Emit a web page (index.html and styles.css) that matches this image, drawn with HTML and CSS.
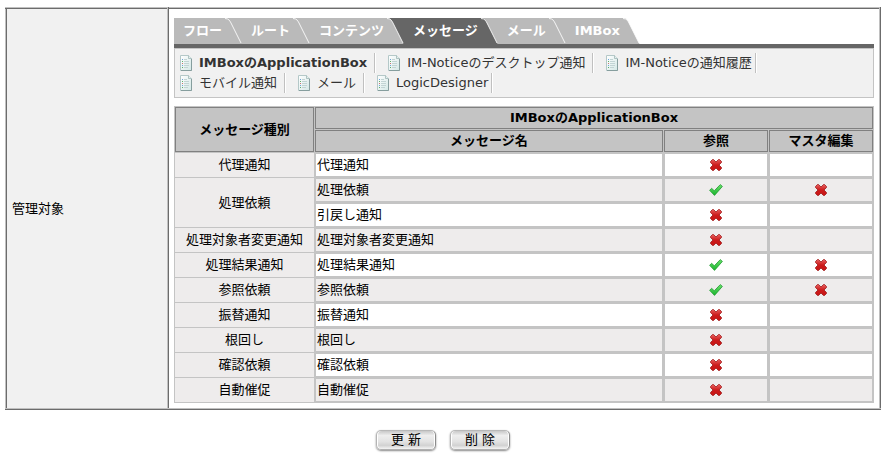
FILE: index.html
```html
<!DOCTYPE html>
<html lang="ja">
<head>
  <meta charset="UTF-8">
  <meta name="viewport" content="width=device-width, initial-scale=1.0">
  <title>管理対象</title>
  <link rel="stylesheet" href="styles.css">
</head>
<body>
  <!-- アイコン定義 -->
  <svg class="defs" width="0" height="0" aria-hidden="true">
    <defs>
      <linearGradient id="gRed" x1="0" y1="0" x2="0" y2="1">
        <stop offset="0" stop-color="#e86060"/>
        <stop offset="0.5" stop-color="#cc1c1c"/>
        <stop offset="1" stop-color="#c81414"/>
      </linearGradient>
      <linearGradient id="gGreen" x1="0" y1="0" x2="0" y2="1">
        <stop offset="0" stop-color="#6be06b"/>
        <stop offset="1" stop-color="#18b52c"/>
      </linearGradient>
      <linearGradient id="gDoc" x1="0" y1="0" x2="1" y2="1">
        <stop offset="0" stop-color="#ffffff"/>
        <stop offset="1" stop-color="#d4e8e6"/>
      </linearGradient>
      <symbol id="cross" viewBox="0 0 12 12">
        <path d="M2.5 .5H3.5L6 3 8.500 .5H9.500L11.500 2.500V3.500L9 6 11.500 8.500V9.500L9.500 11.500H8.500L6 9 3.500 11.500H2.500L.5 9.500V8.500L3 6 .5 3.500V2.500Z" fill="url(#gRed)" stroke="#9c1a1a" stroke-width=".8"/>
      </symbol>
      <symbol id="check" viewBox="0 0 14 12">
        <path d="M.6 6.300 2.600 4.300 5.300 6.800 11.300 .6 13.400 2.400 5.500 11.400Z" fill="url(#gGreen)" stroke="#239a35" stroke-width=".8" stroke-linejoin="round"/>
      </symbol>
      <symbol id="doc" viewBox="0 0 12 16">
        <path d="M.5 .5H8.500L11.500 3.500V15.500H.5Z" fill="url(#gDoc)" stroke="#b4c8c8"/>
        <path d="M11.500 4V15.500H1" fill="none" stroke="#869e9e"/>
        <path d="M8.500 .5V3.500H11.500" fill="#e4efee" stroke="#9fb6b6" stroke-width=".8"/>
        <path d="M4 4.500H7M4 6.500H9M4 8.500H9M4 10.500H9M4 12.500H8" stroke="#c2d4d4"/>
        <path d="M2 4.500H3M2 10.500H3" stroke="#6fa4da"/>
        <path d="M2 6.500H3M2 12.500H3" stroke="#5fae68"/>
        <path d="M2 8.500H3" stroke="#cc7670"/>
      </symbol>
      <symbol id="slant" viewBox="0 0 17 26">
        <path d="M0 0C4 0 5 3 6.500 6L16.500 26H17V0Z" fill="currentColor"/>
        <path d="M0 .5C4 .5 5 3 6.500 6L16 25" fill="none" stroke="#fff" stroke-width="1" stroke-opacity=".85"/>
      </symbol>
    </defs>
  </svg>

  <table class="form-table">
    <tr>
      <th class="form-label" scope="row">管理対象</th>
      <td class="form-body">
        <!-- タブ -->
        <nav class="tabs">
          <a class="tab" href="#">フロー<svg class="tab-edge"><use href="#slant"/></svg></a>
          <a class="tab" href="#">ルート<svg class="tab-edge"><use href="#slant"/></svg></a>
          <a class="tab" href="#">コンテンツ<svg class="tab-edge to-active"><use href="#slant"/></svg></a>
          <a class="tab active" href="#">メッセージ<svg class="tab-edge"><use href="#slant"/></svg></a>
          <a class="tab" href="#">メール<svg class="tab-edge"><use href="#slant"/></svg></a>
          <a class="tab" href="#">IMBox<svg class="tab-edge to-none"><use href="#slant"/></svg></a>
        </nav>

        <!-- サブメニュー -->
        <div class="submenu">
          <div class="submenu-row">
            <a class="item current" href="#"><svg class="icon-doc"><use href="#doc"/></svg>IMBoxのApplicationBox</a>
            <a class="item" href="#"><svg class="icon-doc"><use href="#doc"/></svg>IM-Noticeのデスクトップ通知</a>
            <a class="item" href="#"><svg class="icon-doc"><use href="#doc"/></svg>IM-Noticeの通知履歴</a>
          </div>
          <div class="submenu-row">
            <a class="item" href="#"><svg class="icon-doc"><use href="#doc"/></svg>モバイル通知</a>
            <a class="item" href="#"><svg class="icon-doc"><use href="#doc"/></svg>メール</a>
            <a class="item" href="#"><svg class="icon-doc"><use href="#doc"/></svg>LogicDesigner</a>
          </div>
        </div>

        <!-- メッセージ一覧 -->
        <table class="list">
          <colgroup>
            <col class="col-type">
            <col>
            <col class="col-auth">
            <col class="col-auth">
          </colgroup>
          <thead>
            <tr>
              <th rowspan="2">メッセージ種別</th>
              <th colspan="3">IMBoxのApplicationBox</th>
            </tr>
            <tr>
              <th>メッセージ名</th>
              <th>参照</th>
              <th>マスタ編集</th>
            </tr>
          </thead>
          <tbody>
            <tr>
              <td class="type">代理通知</td>
              <td class="name">代理通知</td>
              <td><svg class="icon-cross"><use href="#cross"/></svg></td>
              <td></td>
            </tr>
            <tr class="even">
              <td class="type" rowspan="2">処理依頼</td>
              <td class="name">処理依頼</td>
              <td><svg class="icon-check"><use href="#check"/></svg></td>
              <td><svg class="icon-cross"><use href="#cross"/></svg></td>
            </tr>
            <tr>
              <td class="name">引戻し通知</td>
              <td><svg class="icon-cross"><use href="#cross"/></svg></td>
              <td></td>
            </tr>
            <tr class="even">
              <td class="type">処理対象者変更通知</td>
              <td class="name">処理対象者変更通知</td>
              <td><svg class="icon-cross"><use href="#cross"/></svg></td>
              <td></td>
            </tr>
            <tr>
              <td class="type">処理結果通知</td>
              <td class="name">処理結果通知</td>
              <td><svg class="icon-check"><use href="#check"/></svg></td>
              <td><svg class="icon-cross"><use href="#cross"/></svg></td>
            </tr>
            <tr class="even">
              <td class="type">参照依頼</td>
              <td class="name">参照依頼</td>
              <td><svg class="icon-check"><use href="#check"/></svg></td>
              <td><svg class="icon-cross"><use href="#cross"/></svg></td>
            </tr>
            <tr>
              <td class="type">振替通知</td>
              <td class="name">振替通知</td>
              <td><svg class="icon-cross"><use href="#cross"/></svg></td>
              <td></td>
            </tr>
            <tr class="even">
              <td class="type">根回し</td>
              <td class="name">根回し</td>
              <td><svg class="icon-cross"><use href="#cross"/></svg></td>
              <td></td>
            </tr>
            <tr>
              <td class="type">確認依頼</td>
              <td class="name">確認依頼</td>
              <td><svg class="icon-cross"><use href="#cross"/></svg></td>
              <td></td>
            </tr>
            <tr class="even">
              <td class="type">自動催促</td>
              <td class="name">自動催促</td>
              <td><svg class="icon-cross"><use href="#cross"/></svg></td>
              <td></td>
            </tr>
          </tbody>
        </table>
      </td>
    </tr>
  </table>

  <!-- ボタン -->
  <div class="buttons">
    <button type="button" class="btn">更 新</button>
    <button type="button" class="btn">削 除</button>
  </div>
</body>
</html>
```

FILE: styles.css
```css
* {
  box-sizing: border-box;
}

body {
  margin: 0;
  padding: 7px 6px 8px 5px;
  background: #fff;
  color: #000;
  font-family: "DejaVu Sans", "Noto Sans CJK JP", sans-serif;
  font-size: 13px;
  line-height: 20px;
}

a {
  color: inherit;
  text-decoration: none;
}

.defs {
  position: absolute;
}

/* 外枠 */
.form-table {
  width: 100%;
  border-collapse: collapse;
}

.form-label,
.form-body {
  border: 2px ridge #c0c0c0;
}

.form-label {
  width: 162px;
  padding: 0 5px;
  background: #f1f1f1;
  font-weight: normal;
  text-align: left;
}

.form-body {
  padding: 9px 5px 5px;
}

/* タブ */
.tabs {
  display: flex;
  border-bottom: 4px solid #666;
}

.tab {
  display: flex;
  height: 26px;
  padding-left: 9px;
  background: #bababa;
  color: #fff;
  font-weight: bold;
  line-height: 26px;
  white-space: nowrap;
}

.tab.active {
  background: #666;
}

.tab-edge {
  width: 17px;
  height: 26px;
  margin-left: 3px;
  color: #bababa;
}

.tab-edge.to-active {
  color: #666;
}

.tab-edge.to-none {
  color: #fff;
}

/* サブメニュー */
.submenu {
  padding: 4px 5px;
  border: 1px solid #c4c4c4;
  background: #f1f1f1;
  color: #333;
}

.submenu-row {
  display: flex;
  gap: 13px;
}

.item {
  display: flex;
  align-items: center;
  height: 20px;
  padding-right: 7px;
  border-right: 1px solid #c0c0c0;
  box-shadow: 1px 0 #fff;
  white-space: nowrap;
}

.item:last-child {
  padding-right: 3px;
}

.item.current {
  font-weight: bold;
}

.icon-doc {
  width: 12px;
  height: 16px;
  margin-right: 7px;
}

/* 一覧 */
.list {
  width: 100%;
  margin-top: 8px;
  border-collapse: separate;
  border-spacing: 1px;
  background: #c4c4c4;
  table-layout: fixed;
}

.col-type {
  width: 139px;
}

.col-auth {
  width: 104px;
}

.list th {
  height: 22px;
  padding: 0;
  border: 1px solid #808080;
}

.list td {
  height: 24px;
  padding: 0 1px;
  border: 1px solid #c4c4c4;
  background: #fff;
  text-align: center;
}

.list .even td {
  background: #eeecec;
}

.list .name {
  text-align: left;
}

.list td.type,
.list .even td.type {
  border: 0;
  background: #eeecec;
}

.icon-cross {
  display: block;
  width: 12px;
  height: 12px;
  margin: 0 auto;
}

.icon-check {
  display: block;
  width: 14px;
  height: 12px;
  margin: 0 auto;
}

/* ボタン */
.buttons {
  display: flex;
  justify-content: center;
  gap: 14px;
  margin-top: 20px;
}

.btn {
  width: 60px;
  height: 20px;
  padding: 0;
  border: 1px solid;
  border-color: #b8b8b8 #8c8c8c #b0b0b0 #b4b4b4;
  border-radius: 5px;
  background: linear-gradient(#c8c8c8, #eee 25%, #e2e2e2 60%, #d2d2d2 80%, #f4f4f4);
  box-shadow: inset 1px 0 #fff, inset -1px 0 #fff, 0 1px 2px #888;
  color: #000;
  font-family: inherit;
  font-size: 13px;
  line-height: 18px;
  cursor: pointer;
}
```
